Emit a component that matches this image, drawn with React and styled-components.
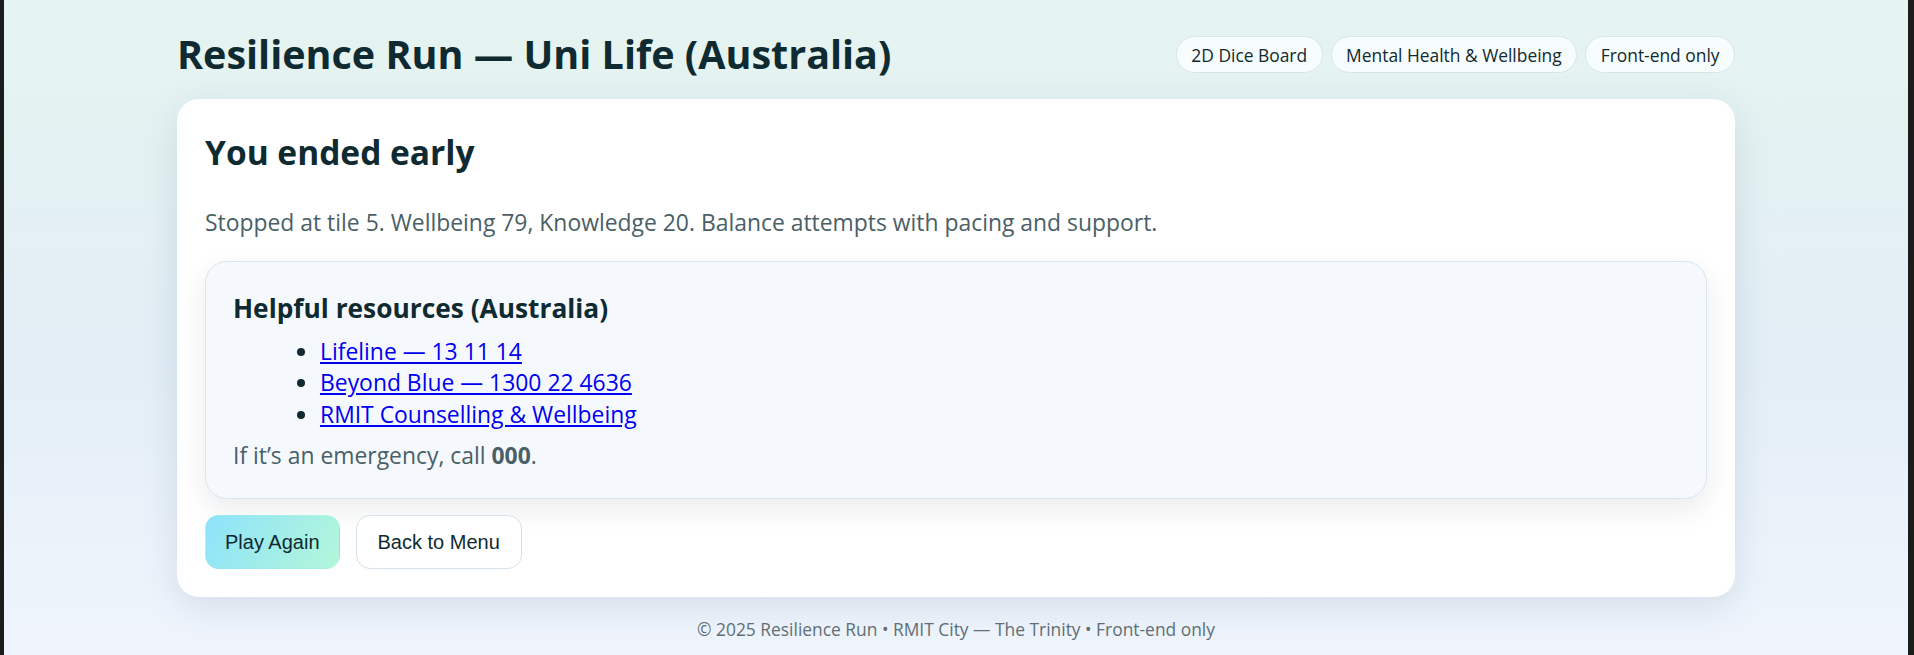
import React from "react";
import styled, { createGlobalStyle } from "styled-components";

const GlobalStyle = createGlobalStyle`
  html, body {
    margin: 0;
    padding: 0;
  }
  body {
    font-family: "Open Sans", "Noto Sans", sans-serif;
    color: #0f2a30;
  }
`;

const tags = ["2D Dice Board", "Mental Health & Wellbeing", "Front-end only"];

const resources = [
  { label: "Lifeline — 13 11 14", href: "#lifeline" },
  { label: "Beyond Blue — 1300 22 4636", href: "#beyondblue" },
  { label: "RMIT Counselling & Wellbeing", href: "#rmit" },
];

const Page = styled.div`
  min-height: 100vh;
  box-sizing: border-box;
  border-left: 4px solid #1c1c1c;
  border-right: 6px solid #1c1c1c;
  padding-top: 31px;
  background: linear-gradient(180deg, #e5f4f0 0%, #e3eef6 55%, #f0f5fd 100%);
`;

const Container = styled.div`
  max-width: 1558px;
  margin: 0 auto;
`;

const Header = styled.header`
  display: flex;
  align-items: center;
  justify-content: space-between;
  margin-bottom: 21px;
`;

const Title = styled.h1`
  margin: 0;
  font-size: 39.5px;
  line-height: 1.2;
  font-weight: 700;
  color: #0f2a30;
`;

const Tags = styled.div`
  display: flex;
  gap: 8px;
`;

const Tag = styled.span`
  display: inline-flex;
  align-items: center;
  height: 37px;
  box-sizing: border-box;
  padding: 0 14.5px;
  border-radius: 999px;
  border: 1px solid #d8e6e7;
  background: #f7fcfc;
  font-size: 17.4px;
  color: #0f2a30;
`;

const Card = styled.main`
  background: #fff;
  border-radius: 22px;
  padding: 28px;
  box-shadow: 0 10px 36px rgba(40, 80, 110, 0.13);
`;

const Heading = styled.h2`
  margin: 5px 0 0;
  font-size: 33.5px;
  line-height: 1.2;
  font-weight: 700;
  color: #0f2a30;
`;

const Summary = styled.p`
  margin: 34px 0 0;
  font-size: 22.9px;
  line-height: 32px;
  color: #4a5f66;
`;

const ResourceBox = styled.section`
  margin-top: 22px;
  padding: 31px 27px 27px;
  border: 1px solid #dbe5ee;
  border-radius: 22px;
  background: #f5f9fe;
  box-shadow: 0 10px 28px rgba(20, 30, 50, 0.09);
`;

const BoxTitle = styled.h3`
  margin: 0;
  font-size: 26.3px;
  line-height: 1.2;
  font-weight: 700;
  color: #0f2a30;
`;

const List = styled.ul`
  margin: 11.7px 0 0;
  padding-left: 87px;
  color: #0f2a30;
`;

const Item = styled.li`
  font-size: 22.9px;
  line-height: 31.6px;
`;

const Link = styled.a`
  color: #0000ee;
  text-decoration: underline;
`;

const Note = styled.p`
  margin: 9.2px 0 0;
  font-size: 22.9px;
  line-height: 31.6px;
  color: #4a5f66;

  strong {
    font-weight: 700;
  }
`;

const Actions = styled.div`
  display: flex;
  gap: 16px;
  margin-top: 16px;
`;

const Button = styled.button`
  height: 54px;
  padding: 0 ${({ $primary }) => ($primary ? "19px" : "21px")};
  border-radius: 14px;
  font-family: "Liberation Sans", Arial, sans-serif;
  font-size: 20px;
  color: #0f2a30;
  cursor: pointer;
  border: 1px solid ${({ $primary }) => ($primary ? "transparent" : "#d6e1ea")};
  background: ${({ $primary }) =>
    $primary ? "linear-gradient(120deg, #8ee3fb 0%, #b3f6d9 100%)" : "#fff"};
`;

const Footer = styled.footer`
  margin-top: 19px;
  padding-bottom: 16px;
  text-align: center;
  font-size: 17.4px;
  line-height: 1.5;
  color: #5e6f76;
`;

export default function App() {
  return (
    <>
      <GlobalStyle />
      <Page>
        <Container>
          <Header>
            <Title>Resilience Run — Uni Life (Australia)</Title>
            <Tags>
              {tags.map((t) => (
                <Tag key={t}>{t}</Tag>
              ))}
            </Tags>
          </Header>

          <Card>
            <Heading>You ended early</Heading>
            <Summary>
              Stopped at tile 5. Wellbeing 79, Knowledge 20. Balance attempts
              with pacing and support.
            </Summary>

            <ResourceBox>
              <BoxTitle>Helpful resources (Australia)</BoxTitle>
              <List>
                {resources.map((r) => (
                  <Item key={r.href}>
                    <Link href={r.href}>{r.label}</Link>
                  </Item>
                ))}
              </List>
              <Note>
                If it’s an emergency, call <strong>000</strong>.
              </Note>
            </ResourceBox>

            <Actions>
              <Button $primary>Play Again</Button>
              <Button>Back to Menu</Button>
            </Actions>
          </Card>

          <Footer>© 2025 Resilience Run • RMIT City — The Trinity • Front-end only</Footer>
        </Container>
      </Page>
    </>
  );
}
